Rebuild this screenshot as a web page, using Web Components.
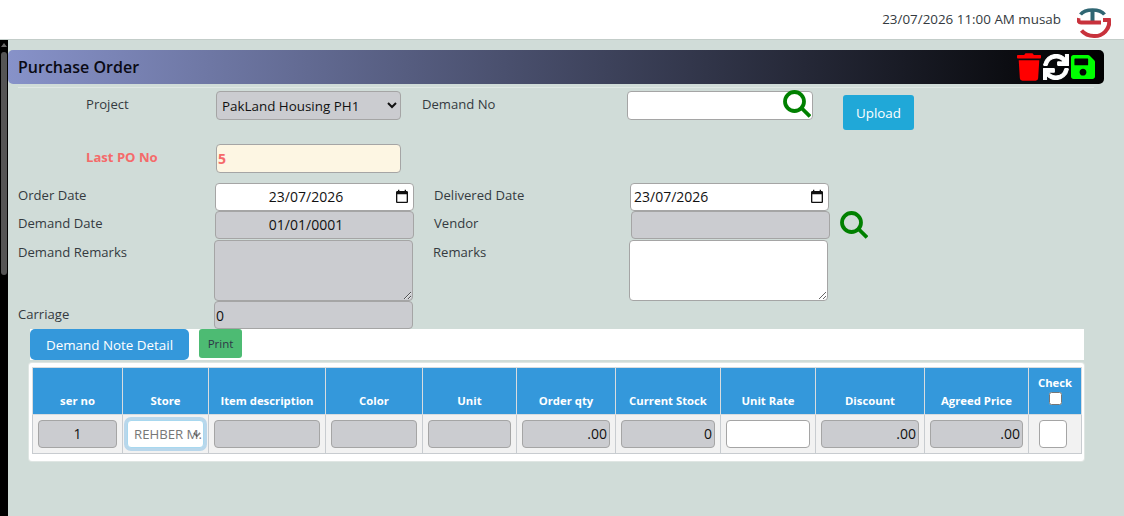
<!DOCTYPE html>
<html>
<head>
<meta charset="utf-8">
<title>Purchase Order</title>
<style>
    html, body { margin: 0; height: 100%; overflow: hidden; }
    body { font-family: "Open Sans", "Noto Sans", sans-serif; font-size: 13px; color: #343a40; }
</style>
</head>
<body>
<po-page>
    <po-topbar stamp="23/07/2026 11:00 AM musab"></po-topbar>
    <po-title heading="Purchase Order"></po-title>

    <po-row cols="130px 185px 21px 205px 186px 30px 71px" indent="78" height="53">
        <po-label low>Project</po-label>
        <po-field type="select" value="PakLand Housing PH1" tone="gray"></po-field>
        <span></span>
        <po-label low>Demand No</po-label>
        <po-field search></po-field>
        <span></span>
        <po-button kind="upload">Upload</po-button>
    </po-row>
    <po-row cols="130px 185px" indent="78" height="39">
        <po-label kind="alert" low>Last PO No</po-label>
        <po-field value="5" tone="cream" alert></po-field>
    </po-row>
    <po-row cols="197px 199px 20px 196px 199px" indent="10" height="28">
        <po-label>Order Date</po-label>
        <po-field type="date" value="23/07/2026" align="center" short></po-field>
        <span></span>
        <po-label>Delivered Date</po-label>
        <po-field type="date" value="23/07/2026" short></po-field>
    </po-row>
    <po-row cols="197px 199px 20px 197px 199px 10px 28px" indent="10" height="29">
        <po-label>Demand Date</po-label>
        <po-field value="01/01/0001" tone="gray" align="center" short></po-field>
        <span></span>
        <po-label>Vendor</po-label>
        <po-field tone="gray" short></po-field>
        <span></span>
        <po-search></po-search>
    </po-row>
    <po-row cols="196px 199px 20px 196px 199px" indent="10" height="61">
        <po-label>Demand Remarks</po-label>
        <po-field type="area" tone="gray"></po-field>
        <span></span>
        <po-label>Remarks</po-label>
        <po-field type="area"></po-field>
    </po-row>
    <po-row cols="196px 199px" indent="10" height="28">
        <po-label low>Carriage</po-label>
        <po-field value="0" tone="gray" short></po-field>
    </po-row>

    <po-section>
        <po-button kind="section">Demand Note Detail</po-button>
        <po-button kind="print">Print</po-button>
    </po-section>
    <po-grid></po-grid>
</po-page>

<script>
const COLUMNS = [
    { title: "ser no", width: 90, type: "text", value: "1", align: "center", tone: "gray" },
    { title: "Store", width: 86, type: "select", value: "REHBER M." },
    { title: "Item description", width: 117, type: "text", value: "", tone: "gray" },
    { title: "Color", width: 97, type: "text", value: "", tone: "gray" },
    { title: "Unit", width: 94, type: "text", value: "", tone: "gray" },
    { title: "Order qty", width: 99, type: "text", value: ".00", align: "right", tone: "gray" },
    { title: "Current Stock", width: 105, type: "text", value: "0", align: "right", tone: "gray" },
    { title: "Unit Rate", width: 95, type: "text", value: "", tone: "white" },
    { title: "Discount", width: 109, type: "text", value: ".00", align: "right", tone: "gray" },
    { title: "Agreed Price", width: 104, type: "text", value: ".00", align: "right", tone: "gray" },
    { title: "Check", width: 53, type: "check" }
];

const ICONS = {
    trash: `<svg width="24" height="28" viewBox="0 0 448 512" fill="#ff0000"><path d="M432 32H312l-9.4-18.7A24 24 0 0 0 281.1 0H166.8a23.72 23.72 0 0 0-21.4 13.3L136 32H16A16 16 0 0 0 0 48v32a16 16 0 0 0 16 16h416a16 16 0 0 0 16-16V48a16 16 0 0 0-16-16zM53.2 467a48 48 0 0 0 47.9 45h245.8a48 48 0 0 0 47.9-45L416 128H32z"/></svg>`,
    sync: `<svg width="26" height="26" viewBox="0 0 512 512" fill="#ffffff" stroke="#ffffff" stroke-width="20"><path d="M440.65 12.57l4 82.77A247.16 247.16 0 0 0 255.83 8C134.73 8 33.91 94.92 12.29 209.82A12 12 0 0 0 24.09 224h49.05a12 12 0 0 0 11.67-9.26 175.91 175.91 0 0 1 317-56.94l-101.46-4.86a12 12 0 0 0-12.57 12v47.41a12 12 0 0 0 12 12H500a12 12 0 0 0 12-12V12a12 12 0 0 0-12-12h-47.37a12 12 0 0 0-11.98 12.57zM255.83 432a175.61 175.61 0 0 1-146-77.8l101.8 4.87a12 12 0 0 0 12.57-12v-47.4a12 12 0 0 0-12-12H12a12 12 0 0 0-12 12V500a12 12 0 0 0 12 12h47.35a12 12 0 0 0 12-12.6l-4.15-82.57A247.17 247.17 0 0 0 255.83 504c121.11 0 221.93-86.92 243.55-201.82a12 12 0 0 0-11.8-14.18h-49.05a12 12 0 0 0-11.67 9.26A175.86 175.86 0 0 1 255.83 432z"/></svg>`,
    save: `<svg width="24" height="28" viewBox="0 0 448 512" fill="#00ff00"><path d="M433.941 129.941l-83.882-83.882A48 48 0 0 0 316.118 32H48C21.49 32 0 53.49 0 80v352c0 26.51 21.49 48 48 48h352c26.51 0 48-21.49 48-48V163.882a48 48 0 0 0-14.059-33.941zM224 416c-35.346 0-64-28.654-64-64 0-35.346 28.654-64 64-64s64 28.654 64 64c0 35.346-28.654 64-64 64zm96-304.52V212c0 6.627-5.373 12-12 12H76c-6.627 0-12-5.373-12-12V108c0-6.627 5.373-12 12-12h228.52c3.183 0 6.235 1.264 8.485 3.515l3.48 3.48A11.996 11.996 0 0 1 320 111.48z"/></svg>`,
    search: `<svg width="28" height="28" viewBox="0 0 28 28" fill="none" stroke="#008000"><circle cx="11.500" cy="11.500" r="9.500" stroke-width="3.800"/><path d="M18.500 18l8.500 8.500" stroke-width="3.800"/></svg>`,
    calendar: `<svg width="16" height="16" viewBox="0 0 24 24" fill="#111"><path d="M19 3h-1V1h-2v2H8V1H6v2H5c-1.110 0-1.990.9-1.990 2L3 19c0 1.100.89 2 2 2h14c1.100 0 2-.9 2-2V5c0-1.100-.9-2-2-2zm0 16H5V8h14v11z"/></svg>`,
    chevron: `<svg width="8" height="5" viewBox="0 0 10 6" fill="none" stroke="#333" stroke-width="2"><path d="M1 1l4 4 4-4"/></svg>`,
    logo: `<svg width="34" height="34" viewBox="0 0 34 34" fill="none">
        <path d="M3.500 9.500C8 3.500 23 3.500 27.500 9.500" stroke="#2f6673" stroke-width="3.600"/>
        <path d="M15.500 5v11" stroke="#2f6673" stroke-width="4"/>
        <path d="M24 17.500H4C1.800 17.500 1 15.500 1.500 13" stroke="#c8323c" stroke-width="4"/>
        <path d="M26 15h6c1.500 9-6.500 16.500-15 16C11.500 31 7 28.500 4.500 25.500" stroke="#c8323c" stroke-width="4"/>
    </svg>`
};

const CONTROL_CSS = `
    input, select, textarea {
        box-sizing: border-box;
        width: 100%;
        height: 100%;
        margin: 0;
        border: 1px solid #a5a5a5;
        border-radius: 4px;
        padding: 2px 1px;
        font: 14px "Open Sans", "Noto Sans", sans-serif;
        color: #111;
        background: #fff;
        outline: none;
        display: block;
    }
    .gray { background: #cbccd0; }
    .cream { background: #fdf6e3; }
    .center { text-align: center; }
    .right { text-align: right; }
`;

class PoPage extends HTMLElement {
    constructor() {
        super();
        this.attachShadow({ mode: "open" });
        this.shadowRoot.innerHTML = `
            <style>
                :host { display: flex; flex-direction: column; height: 516px; background: #d0dcd8; overflow: hidden; }
                .top { flex: none; }
                .body { flex: 1; display: flex; min-height: 0; }
                .bar { flex: none; width: 8px; background: #000; display: flex; flex-direction: column; align-items: center; }
                .arrow { margin-top: 3px; width: 0; height: 0; border: 3px solid transparent; border-top: 0; border-bottom: 4px solid #6a6a6a; }
                .thumb { margin-top: 5px; width: 6px; height: 223px; border-radius: 3px; background: #555; }
                .main { flex: 1; min-width: 0; display: flex; flex-direction: column; }
            </style>
            <div class="top"><slot name="top"></slot></div>
            <div class="body">
                <div class="bar"><div class="arrow"></div><div class="thumb"></div></div>
                <div class="main"><slot></slot></div>
            </div>
        `;
        this.querySelector("po-topbar").slot = "top";
    }
}

class PoTopbar extends HTMLElement {
    constructor() {
        super();
        this.attachShadow({ mode: "open" });
        this.shadowRoot.innerHTML = `
            <style>
                :host { display: flex; align-items: center; justify-content: flex-end; height: 39px; background: #fff; border-bottom: 1px solid #c3cdc9; padding-right: 13px; }
                span { font-size: 13.4px; color: #343a40; margin-right: 16px; margin-top: -1px; }
                svg { display: block; margin-top: 4px; }
            </style>
            <span>${this.getAttribute("stamp")}</span>
            ${ICONS.logo}
        `;
    }
}

class PoTitle extends HTMLElement {
    constructor() {
        super();
        this.attachShadow({ mode: "open" });
        this.shadowRoot.innerHTML = `
            <style>
                :host { display: block; margin: 10px 20px 0 0; }
                .head {
                    height: 34px; box-sizing: border-box; padding: 0 9px 0 10px;
                    display: flex; align-items: center; justify-content: space-between;
                    border-radius: 5px;
                    background: linear-gradient(to right, #8792c9, #000);
                }
                h1 { margin: 0; font-size: 16px; font-weight: 600; color: #0a0a14; }
                .icons { display: flex; align-items: center; gap: 2px; }
                svg { display: block; }
                hr { margin: 3px 10px 3px 10px; border: 0; height: 1px; background: #e0e8e5; }
            </style>
            <div class="head">
                <h1>${this.getAttribute("heading")}</h1>
                <div class="icons">${ICONS.trash}${ICONS.sync}${ICONS.save}</div>
            </div>
            <hr>
        `;
    }
}

class PoRow extends HTMLElement {
    constructor() {
        super();
        this.attachShadow({ mode: "open" });
        this.shadowRoot.innerHTML = `
            <style>
                :host { display: grid; align-items: start; justify-content: start; }
            </style>
            <slot></slot>
        `;
        this.style.gridTemplateColumns = this.getAttribute("cols");
        this.style.marginLeft = this.getAttribute("indent") + "px";
        this.style.height = this.getAttribute("height") + "px";
    }
}

class PoLabel extends HTMLElement {
    constructor() {
        super();
        this.attachShadow({ mode: "open" });
        this.shadowRoot.innerHTML = `
            <style>
                :host { display: block; padding-top: 3px; line-height: 18px; font-size: 13.1px; color: #343a40; white-space: nowrap; }
                :host([low]) { padding-top: 4px; }
                :host([kind="alert"]) { font-weight: 700; color: #f56a6a; }
            </style>
            <slot></slot>
        `;
    }
}

class PoField extends HTMLElement {
    constructor() {
        super();
        this.attachShadow({ mode: "open" });
        const type = this.getAttribute("type") || "text";
        const value = this.getAttribute("value") || "";
        const cls = [this.getAttribute("tone"), this.getAttribute("align")].filter(Boolean).join(" ");
        let control = `<input type="text" class="${cls}" value="${value}">`;
        if (type === "select") {
            control = `<select class="${cls}"><option>${value}</option></select>`;
        }
        if (type === "area") {
            control = `<textarea class="${cls}"></textarea>`;
        }
        let extra = "";
        if (this.hasAttribute("search")) {
            extra = `<div class="lens">${ICONS.search}</div>`;
        }
        if (type === "date") {
            extra = `<div class="cal">${ICONS.calendar}</div>`;
        }
        this.shadowRoot.innerHTML = `
            <style>
                :host { display: block; position: relative; height: 29px; }
                :host([short]) { height: 28px; }
                :host([type="area"]) { height: 61px; }
                ${CONTROL_CSS}
                .center { padding: 1px 18px 3px 1px; }
                :host([type="date"]) input:not(.center) { padding: 1px 1px 3px 3px; }
                select { padding-left: 1px; font-size: 13.4px; }
                :host([alert]) input { color: #f56a6a; font-weight: 700; }
                textarea { resize: vertical; }
                .lens { position: absolute; right: 2px; top: -1px; }
                .cal { position: absolute; right: 4px; top: 6px; }
                .lens svg, .cal svg { display: block; }
            </style>
            ${control}
            ${extra}
        `;
    }
}

class PoSearch extends HTMLElement {
    constructor() {
        super();
        this.attachShadow({ mode: "open" });
        this.shadowRoot.innerHTML = `
            <style>
                :host { display: block; height: 28px; }
                svg { display: block; }
            </style>
            ${ICONS.search}
        `;
    }
}

class PoButton extends HTMLElement {
    constructor() {
        super();
        this.attachShadow({ mode: "open" });
        this.shadowRoot.innerHTML = `
            <style>
                :host { display: block; }
                button {
                    display: block; width: 100%; border: 0; cursor: pointer; padding: 0;
                    font: 13.4px "Open Sans", "Noto Sans", sans-serif; color: #fff;
                }
                :host([kind="upload"]) { margin-top: 4px; }
                :host([kind="upload"]) button { height: 35px; background: #20a8d8; border-radius: 3px; }
                :host([kind="section"]) button { width: 159px; height: 31px; background: #3498db; border-radius: 5px; }
                :host([kind="print"]) button { width: 43px; height: 29px; background: #4dbb73; border-radius: 3px; font-size: 11.5px; color: #2d3748; }
            </style>
            <button><slot></slot></button>
        `;
    }
}

class PoSection extends HTMLElement {
    constructor() {
        super();
        this.attachShadow({ mode: "open" });
        this.shadowRoot.innerHTML = `
            <style>
                :host { display: flex; gap: 10px; align-items: flex-start; margin: 0 40px 0 22px; height: 31px; background: #fff; }
            </style>
            <slot></slot>
        `;
    }
}

class PoGrid extends HTMLElement {
    constructor() {
        super();
        this.attachShadow({ mode: "open" });
        const cols = COLUMNS.map(c => `<col style="width:${c.width}px">`).join("");
        const heads = COLUMNS.map(c => c.type === "check"
            ? `<th class="check">${c.title}<input type="checkbox"></th>`
            : `<th>${c.title}</th>`).join("");
        const cells = COLUMNS.map(c => `<td>${this.cell(c)}</td>`).join("");
        this.shadowRoot.innerHTML = `
            <style>
                :host { display: block; margin: 3px 40px 0 21px; padding: 4px 3px 7px; box-sizing: border-box; width: 1055px; height: 98px; background: #fff; border-radius: 3px; box-shadow: 0 0 0 1px #dfe6e3; }
                ${CONTROL_CSS}
                table { border-collapse: collapse; table-layout: fixed; width: 1049px; }
                th, td { border: 1px solid #c8ccd0; padding: 0; }
                th {
                    height: 47px; box-sizing: border-box; background: #3498db; color: #fff;
                    font: 700 11.3px/15px "Open Sans", "Noto Sans", sans-serif;
                    vertical-align: bottom; padding-bottom: 6px; border-color: #d8dcdf;
                }
                th.check { padding-bottom: 9px; }
                th input[type="checkbox"] { display: block; width: 13px; height: 13px; margin: 2px auto 0; }
                td { height: 38px; box-sizing: border-box; background: #f2f2f2; padding: 5px; }
                td input, td select { height: 28px; padding-top: 1px; padding-bottom: 3px; }
                td input.right { padding-right: 2px; }
                td .store { position: relative; margin: 0 -1px; }
                td .store svg { position: absolute; right: 3px; top: 12px; opacity: .6; display: block; }
                td select {
                    appearance: none; -webkit-appearance: none;
                    border-color: #a8d8ef; box-shadow: 0 0 0 3px rgba(52, 152, 219, .3);
                    color: #777; padding: 0 0 0 6px; font-size: 13.2px;
                }
                td .tick { width: 28px; margin-left: 5px; }
            </style>
            <table>
                <colgroup>${cols}</colgroup>
                <thead><tr>${heads}</tr></thead>
                <tbody><tr>${cells}</tr></tbody>
            </table>
        `;
    }

    cell(c) {
        if (c.type === "select") {
            return `<div class="store"><select><option>${c.value}</option></select>${ICONS.chevron}</div>`;
        }
        if (c.type === "check") {
            return `<input class="tick" type="text">`;
        }
        return `<input type="text" class="${c.tone} ${c.align || ""}" value="${c.value}">`;
    }
}

customElements.define("po-page", PoPage);
customElements.define("po-topbar", PoTopbar);
customElements.define("po-title", PoTitle);
customElements.define("po-row", PoRow);
customElements.define("po-label", PoLabel);
customElements.define("po-field", PoField);
customElements.define("po-search", PoSearch);
customElements.define("po-button", PoButton);
customElements.define("po-section", PoSection);
customElements.define("po-grid", PoGrid);
</script>
</body>
</html>
